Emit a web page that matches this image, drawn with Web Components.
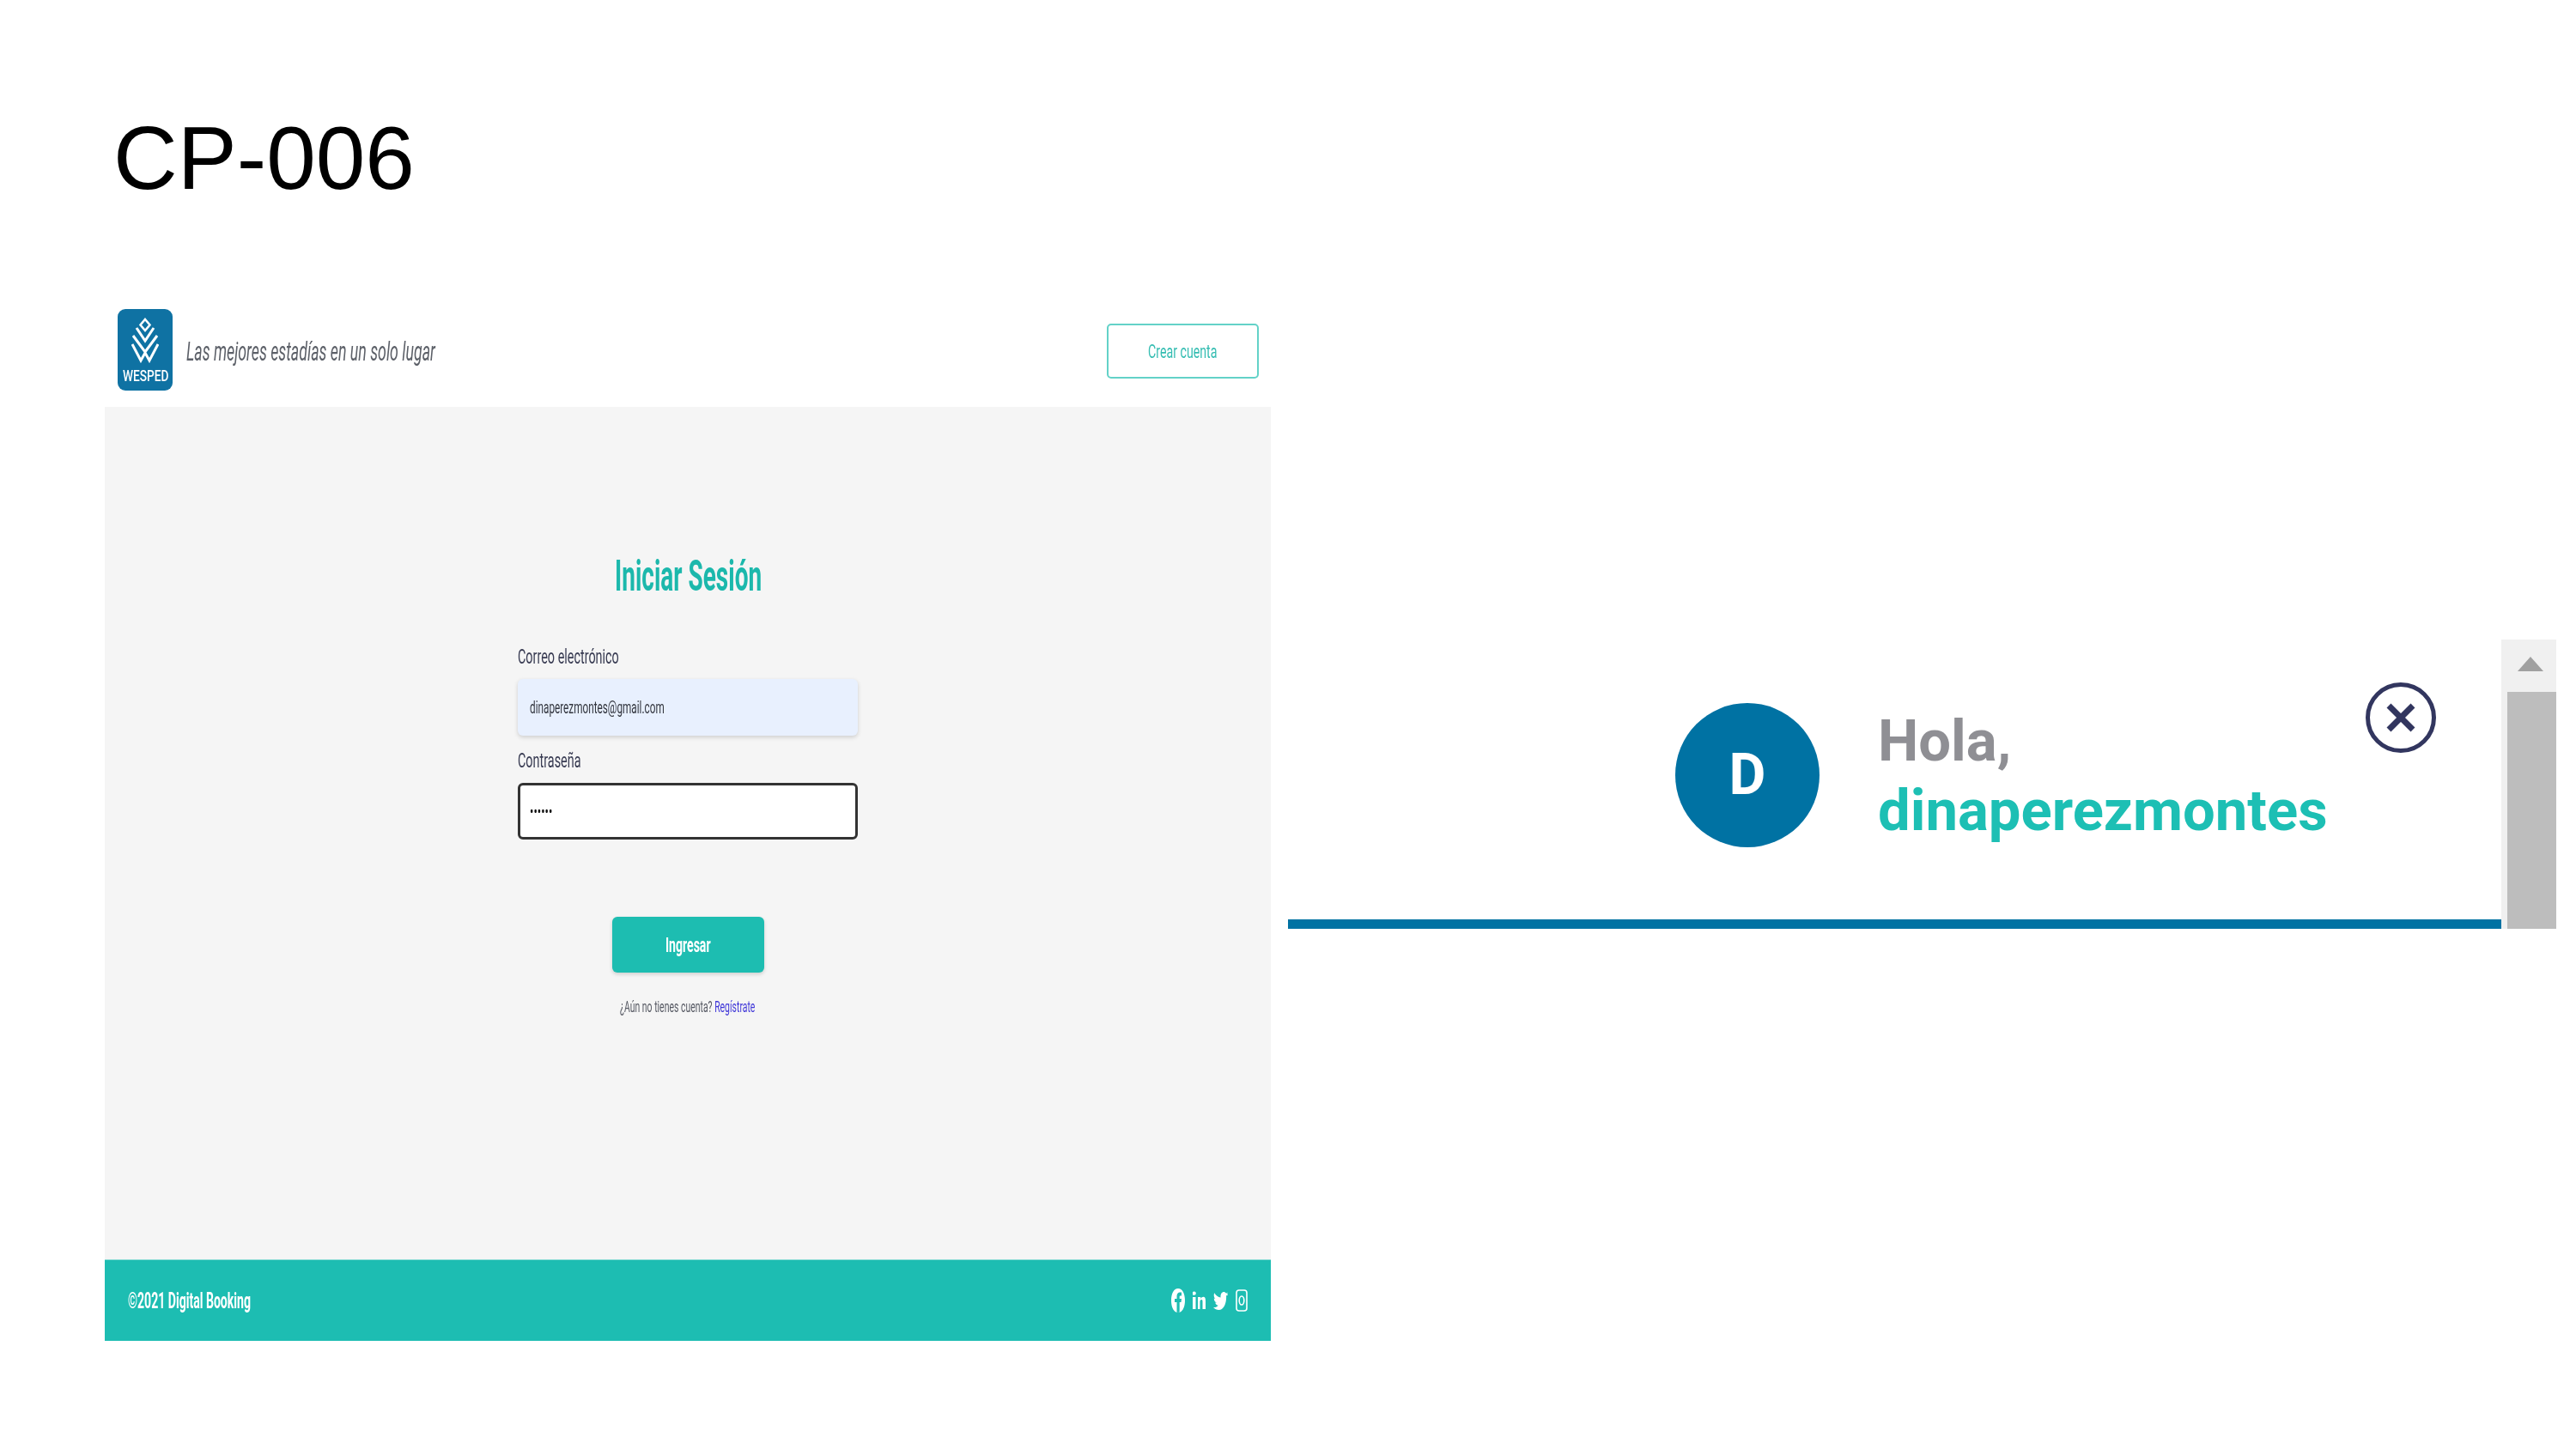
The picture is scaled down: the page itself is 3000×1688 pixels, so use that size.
<!DOCTYPE html>
<html lang="es"><head><meta charset="utf-8"><title>CP-006</title>
<style>html,body{margin:0;background:#fff}</style></head>
<body>
<slide-page>
  <login-shot slot="left"></login-shot>
  <user-panel slot="right"></user-panel>
</slide-page>
<script>
function el(name, html){
  customElements.define(name, class extends HTMLElement{
    constructor(){super();this.attachShadow({mode:'open'}).innerHTML=html;}
  });
}
el('squeeze-text',`<style>
:host{display:block;font:inherit;color:inherit}
span{display:inline-block;white-space:nowrap;transform-origin:0 50%;transform:scaleX(var(--k,.7))}
</style><span><slot></slot></span>`);
el('slide-page',`<style>
:host{display:block;width:3000px;height:1688px;background:#fff;overflow:hidden;font-family:"Liberation Sans",Arial,sans-serif}
h1{margin:0;height:340px;box-sizing:border-box;padding:126px 0 0 132px;font:400 103.500px/116px "Liberation Sans",Arial,sans-serif;color:#000}
.row{display:flex;align-items:flex-start;padding-left:122px}
.r{margin-left:20px;padding-top:405px}
</style><h1>CP-006</h1><div class="row"><slot name="left"></slot><div class="r"><slot name="right"></slot></div></div>`);
el('wesped-logo',`<style>
:host{display:flex;flex-direction:column;align-items:center;width:64px;height:95px;border-radius:9px;background:#0f72a3;color:#fff}
svg{display:block;width:32px;height:53px;margin-top:10px}
squeeze-text{width:53px;margin-top:6px;font:500 18px/18px "Roboto",sans-serif;--k:.76}
</style><svg viewBox="0 0 32 53" fill="none" stroke="#fff" stroke-width="3">
<path d="M16 2 21.500 8.500 16 15 10.500 8.500Z" stroke-width="2.500"/>
<path d="M6 12 16 27 26 12M2 21 16 40 30 21M1 31 11 50 16 41 21 50 31 31"/>
</svg><squeeze-text>WESPED</squeeze-text>`);
el('site-header',`<style>
:host{display:flex;align-items:center;justify-content:space-between;height:134px;padding:0 14px 0 15px;background:#fff}
.l{display:flex;align-items:center;gap:16px}
.t{width:291px;margin-top:5px;font:italic 400 31px/36px "Roboto",sans-serif;color:#5c6068;--k:.573}
.b{box-sizing:border-box;width:177px;height:64px;margin-top:3px;border:2px solid #63d2c8;border-radius:5px;display:flex;align-items:center;justify-content:center;padding-top:3px;color:#35bdb2;font:400 22px/26px "Roboto",sans-serif}
.b squeeze-text{width:82px;--k:.645}
</style><div class="l"><wesped-logo></wesped-logo><squeeze-text class="t">Las mejores estadías en un solo lugar</squeeze-text></div><div class="b"><squeeze-text>Crear cuenta</squeeze-text></div>`);
el('form-field',`<style>
:host{display:block;width:396px}
label{display:block;height:37px;font:400 24px/22px "Roboto",sans-serif;color:#383b52;--k:.6}
.i{box-sizing:border-box;height:66px;padding-left:14px;display:flex;align-items:center;border-radius:6px;font:400 21px/24px "Roboto",sans-serif;color:#33363f;--k:.56}
:host([variant=filled]) .i{background:#e8f0fe;box-shadow:0 2px 5px rgba(0,0,0,.16)}
:host([variant=focus]) .i{background:#fff;border:3px solid #333;padding-left:11px;color:#111;--k:.62}
</style><label><squeeze-text><slot name="label"></slot></squeeze-text></label><div class="i"><squeeze-text><slot></slot></squeeze-text></div>`);
el('login-form',`<style>
:host{display:flex;flex-direction:column;align-items:center;padding-top:174px}
h2{margin:0 0 60px;height:46px;width:171px;font:700 50px/46px "Roboto",sans-serif;color:#1cb8ac;--k:.56}
.f{display:flex;flex-direction:column;gap:18px}
.btn{margin-top:90px;width:177px;height:65px;border-radius:6px;background:#1dbdb1;box-shadow:0 2px 4px rgba(0,0,0,.16);display:flex;align-items:center;justify-content:center;color:#fff;font:700 24px/26px "Roboto",sans-serif}
.btn squeeze-text{width:53px;--k:.586}
p{margin:28px 0 0;width:159px;font:400 19px/24px "Roboto",sans-serif;color:#555862;--k:.55}
a{color:#3f36d8;text-decoration:none}
</style><h2><squeeze-text>Iniciar Sesión</squeeze-text></h2>
<div class="f">
<form-field variant="filled"><span slot="label">Correo electrónico</span>dinaperezmontes@gmail.com</form-field>
<form-field variant="focus"><span slot="label">Contraseña</span>••••••</form-field></div>
<div class="btn"><squeeze-text>Ingresar</squeeze-text></div>
<p><squeeze-text>¿Aún no tienes cuenta? <a href="#">Regístrate</a></squeeze-text></p>`);
el('social-icons',`<style>
:host{display:flex;align-items:center;gap:9px}
svg{display:block;height:28px;fill:#fff}
</style>
<svg viewBox="0 0 16 28" width="16"><path fill-rule="evenodd" d="M8 0C3 0 0 6 0 14s3 14 8 14 8-6 8-14S13 0 8 0ZM6.500 28V16H4v-4h2.500V9c0-3 1.500-4.500 3.500-4.500h2v4h-1.300c-.7 0-1 .4-1 1V12H12l-.5 4H9.700v12Z"/></svg>
<svg viewBox="0 0 15 28" width="15"><path d="M0 10h3.500v14H0zM1.700 3.500a2 2 0 1 1 0 4.300 2 2 0 0 1 0-4.300ZM6 10h3.300v2c.8-1.500 2-2.300 3-2.300 2.200 0 2.700 1.800 2.700 5V24h-3.500v-8.500c0-1.700-.3-2.500-1.300-2.500-1.100 0-1.700 1-1.700 2.700V24H6Z"/></svg>
<svg viewBox="0 0 17 28" width="17"><path d="M17 7.500c-.6.400-1.200.7-1.900.8v2.200C15.100 17.500 12 25 6.500 25 4 25 1.800 24 0 22c.3.100.6.100 1 .1 1.800 0 3.400-.9 4.700-2.300-1.600-.1-3-1.400-3.500-3.300.5.200 1.200.2 1.600 0-1.800-.5-3-2.500-3-4.900.5.300 1 .5 1.600.5C1.300 11 .7 9.500.7 8c0-1 .2-2 .6-2.700 1.700 2.900 4.300 4.900 7.300 5.100-.1-.4-.1-.8-.1-1.200C8.500 6.500 10 4 12.200 4c1.100 0 2 .6 2.700 1.500.8-.2 1.400-.6 2-1.100-.3 1.100-.8 2-1.500 2.600.6-.1 1.100-.3 1.600-.5Z"/></svg>
<svg viewBox="0 0 14 28" width="14"><rect x="1" y="2" width="12" height="24" rx="3" fill="none" stroke="#fff" stroke-width="1.600"/><ellipse cx="7" cy="14" rx="2.800" ry="5" fill="none" stroke="#fff" stroke-width="1.600"/></svg>`);
el('site-footer',`<style>
:host{display:flex;align-items:center;justify-content:space-between;box-sizing:border-box;height:95px;padding:0 27px 0 27px;background:#1dbdb2;color:#fff;border-top:1px solid #8fdcd5}
.t{width:145px;margin-top:2px;font:700 25px/30px "Roboto",sans-serif;--k:.5625}
</style><squeeze-text class="t">©2021 Digital Booking</squeeze-text><social-icons></social-icons>`);
el('login-shot',`<style>
:host{display:flex;flex-direction:column;width:1358px;height:1222px;filter:blur(.6px)}
main{flex:1;background:#f5f5f5;display:block}
</style><site-header></site-header><main><login-form></login-form></main><site-footer></site-footer>`);
el('close-icon',`<style>:host{display:block;width:82px;height:82px}svg{display:block}</style>
<svg width="82" height="82" viewBox="0 0 82 82" fill="none" stroke="#32365f"><circle cx="41" cy="41" r="38.500" stroke-width="5"/><path d="M27 27 55 55M55 27 27 55" stroke-width="7"/></svg>`);
el('fake-scrollbar',`<style>
:host{display:flex;flex-direction:column;width:64px;height:337px;background:#f0f0f0}
.up{height:61px;display:flex;justify-content:center;padding-top:20px;box-sizing:border-box;padding-left:3px}
.th{flex:1;margin-left:7px;background:#bdbdbd}
i{display:block;width:0;height:0;border:solid transparent;border-width:0 15px 17px;border-bottom-color:#a0a0a0}
</style><div class="up"><i></i></div><div class="th"></div>`);
el('user-panel',`<style>
:host{display:flex;align-items:flex-start;width:1477px;height:337px}
.card{position:relative;box-sizing:border-box;width:1413px;height:337px;border-bottom:11px solid #0072a3;padding:74px 0 0 451px;display:flex;gap:68px}
.av{width:168px;height:168px;border-radius:50%;background:#0072a3;color:#fff;display:flex;align-items:center;justify-content:center;font:700 66px/1 "Roboto",sans-serif;filter:blur(.5px)}
.tx{margin-top:4px;font:700 67px/81px "Roboto",sans-serif;filter:blur(.5px)}
.h{color:#8f8f94}.n{color:#1dbfb4}
close-icon{position:absolute;left:1255px;top:50px;filter:blur(.4px)}
</style><div class="card"><div class="av">D</div><div class="tx"><div class="h">Hola,</div><div class="n">dinaperezmontes</div></div><close-icon></close-icon></div><fake-scrollbar></fake-scrollbar>`);
</script>
</body></html>
